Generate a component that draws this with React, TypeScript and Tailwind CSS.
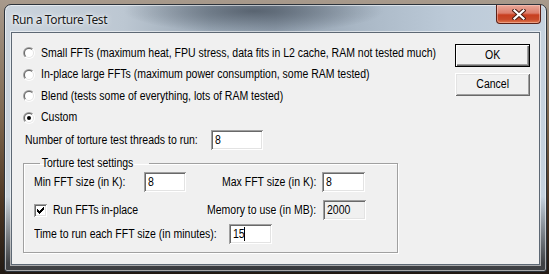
import React from "react";

const F =
  "font-['Liberation_Sans',Arial,sans-serif] text-[12px] leading-[15px] text-black whitespace-nowrap origin-left scale-x-[0.875]";

const SUNKEN =
  "shadow-[inset_1px_1px_0_#a0a0a0,inset_-1px_-1px_0_#ffffff,inset_2px_2px_0_#696969,inset_-2px_-2px_0_#e3e3e3]";

function Radio({ checked, label }: { checked?: boolean; label: string }) {
  return (
    <div className="flex items-center">
      <span className="w-[12px] h-[12px] rounded-full bg-[linear-gradient(135deg,#a0a0a0_50%,#ffffff_50%)] flex items-center justify-center shrink-0">
        <span className="w-[10px] h-[10px] rounded-full bg-[linear-gradient(135deg,#696969_50%,#e3e3e3_50%)] flex items-center justify-center">
          <span className="w-[8px] h-[8px] rounded-full bg-white flex items-center justify-center">
            {checked && <span className="w-[4px] h-[4px] rounded-full bg-black" />}
          </span>
        </span>
      </span>
      <span className={`${F} ml-[6px]`}>{label}</span>
    </div>
  );
}

function Edit({
  value,
  w,
  disabled,
  caret,
}: {
  value: string;
  w: string;
  disabled?: boolean;
  caret?: boolean;
}) {
  return (
    <div
      className={`${w} h-[20px] ${SUNKEN} ${disabled ? "bg-[#f0f0f0]" : "bg-white"} flex items-center pl-[4px] shrink-0`}
    >
      <span className={`${F} ${disabled ? "text-[#6d6d6d]" : ""}`}>{value}</span>
      {caret && <span className="w-[1px] h-[14px] bg-black -ml-[2px]" />}
    </div>
  );
}

function Button({ label, def }: { label: string; def?: boolean }) {
  return (
    <div
      className={`w-[75px] h-[23px] bg-[#f0f0f0] flex items-center justify-center ${
        def
          ? "border border-black shadow-[inset_1px_1px_0_#ffffff,inset_-1px_-1px_0_#696969,inset_-2px_-2px_0_#a0a0a0]"
          : "shadow-[inset_1px_1px_0_#ffffff,inset_-1px_-1px_0_#696969,inset_2px_2px_0_#e3e3e3,inset_-2px_-2px_0_#a0a0a0]"
      }`}
    >
      <span className="font-['Liberation_Sans',Arial,sans-serif] text-[12px] leading-[15px] text-black whitespace-nowrap scale-x-[0.875]">
        {label}
      </span>
    </div>
  );
}

function CloseButton() {
  return (
    <div className="w-[45px] h-[19px] mr-[5px] rounded-b-[4px] border border-t-0 border-[#5b2118] bg-[linear-gradient(180deg,#eaa899_0%,#dc7e6c_45%,#c83e20_55%,#c84a2a_80%,#e27a4e_100%)] shadow-[inset_0_0_0_1px_rgba(255,210,200,0.45)] flex items-center justify-center">
      <svg width="14" height="11" viewBox="0 0 14 11">
        <path
          d="M2.5 1.5 L11.5 9.5 M11.5 1.5 L2.5 9.5"
          stroke="#4a1d14"
          strokeWidth="4.2"
          strokeLinecap="square"
        />
        <path
          d="M2.5 1.5 L11.5 9.5 M11.5 1.5 L2.5 9.5"
          stroke="#ffffff"
          strokeWidth="2.2"
          strokeLinecap="square"
        />
      </svg>
    </div>
  );
}

export default function App() {
  return (
    <div className="w-[549px] h-[274px] overflow-hidden bg-[linear-gradient(180deg,#a89a8c_0%,#7a634a_45%,#4a3422_75%,#221a14_100%)] pl-[4px] pt-[4px]">
      <div className="w-[543px] h-[268px] rounded-t-[7px] rounded-b-[3px] border border-[#2c333b] [background:linear-gradient(180deg,rgba(0,0,0,0)_72%,rgba(40,40,42,0.85)_97%),radial-gradient(ellipse_130px_22px_at_46%_6px,rgba(70,80,92,0.75),rgba(70,80,92,0)),linear-gradient(90deg,#ccd5de_0%,#bcc7d2_22%,#98a6b4_38%,#8e9cab_50%,#a9b7c5_65%,#bccad8_82%,#c6d2de_100%)] shadow-[inset_0_0_0_1px_rgba(255,255,255,0.55)] flex flex-col">
        <div className="h-[27px] flex items-start justify-between pl-[7px] shrink-0">
          <span className="mt-[7px] font-['Noto_Sans',sans-serif] text-[12px] tracking-[-0.4px] leading-[15px] text-[#1a1a1a] [text-shadow:0_0_6px_#ffffff,0_0_3px_#ffffff]">
            Run a Torture Test
          </span>
          <CloseButton />
        </div>
        <div className="mx-[6px] mb-[6px] flex-1 border border-[#5d6874] bg-[#f0f0f0] shadow-[0_0_0_1px_rgba(255,255,255,0.55)] flex">
          <div className="flex-1 min-w-0 flex flex-col pl-[11px] pt-[9px]">
            <div className="h-[22px] flex items-center">
              <Radio label="Small FFTs (maximum heat, FPU stress, data fits in L2 cache, RAM not tested much)" />
            </div>
            <div className="h-[21px] flex items-center">
              <Radio label="In-place large FFTs (maximum power consumption, some RAM tested)" />
            </div>
            <div className="h-[22px] flex items-center">
              <Radio label="Blend (tests some of everything, lots of RAM tested)" />
            </div>
            <div className="h-[21px] flex items-center">
              <Radio checked label="Custom" />
            </div>
            <div className="h-[20px] mt-[2px] flex items-center pl-[2px]">
              <span className={`${F} w-[186px]`}>Number of torture test threads to run:</span>
              <Edit value="8" w="w-[52px]" />
            </div>
            <fieldset className="mt-[6px] w-[375px] border border-[#a0a0a0] shadow-[1px_1px_0_#ffffff,inset_1px_1px_0_#ffffff] pl-[10px] pb-[8px] pt-0">
              <legend className={`${F} ml-[6px] px-[2px]`}>Torture test settings</legend>
              <div className="h-[20px] mt-[1px] flex items-center">
                <span className={`${F} w-[110px]`}>Min FFT size (in K):</span>
                <Edit value="8" w="w-[42px]" />
                <span className={`${F} ml-[36px] w-[100px]`}>Max FFT size (in K):</span>
                <Edit value="8" w="w-[43px]" />
              </div>
              <div className="h-[20px] mt-[8px] flex items-center">
                <div className="w-[173px] flex items-center">
                  <span className={`w-[13px] h-[13px] bg-white ${SUNKEN} flex items-center justify-center`}>
                    <svg width="7" height="7" viewBox="0 0 7 7">
                      <path d="M0 2h1v1h1v1h1v-1h1v-1h1v-1h1v-1h1v3h-1v1h-1v1h-1v1h-1v1h-1v-1h-1v-1h-1z" fill="#000" />
                    </svg>
                  </span>
                  <span className={`${F} ml-[6px]`}>Run FFTs in-place</span>
                </div>
                <span className={`${F} w-[116px] text-[#a0a0a0] [text-shadow:1px_1px_0_#ffffff]`}>
                  Memory to use (in MB):
                </span>
                <Edit value="2000" w="w-[43px]" disabled />
              </div>
              <div className="h-[20px] mt-[4px] flex items-center">
                <span className={`${F} w-[195px]`}>Time to run each FFT size (in minutes):</span>
                <Edit value="15" w="w-[43px]" caret />
              </div>
            </fieldset>
          </div>
          <div className="w-[75px] shrink-0 mr-[9px] pt-[11px] flex flex-col gap-[6px]">
            <Button label="OK" def />
            <Button label="Cancel" />
          </div>
        </div>
      </div>
    </div>
  );
}
